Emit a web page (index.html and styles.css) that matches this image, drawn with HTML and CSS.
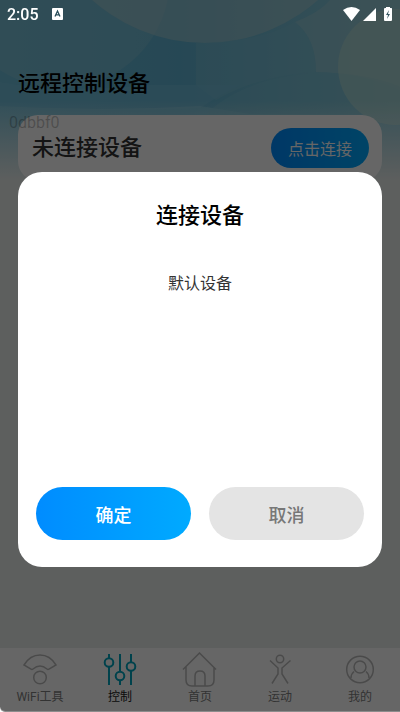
FILE: index.html
```html
<!DOCTYPE html>
<html lang="zh-CN">
<head>
<meta charset="utf-8">
<meta name="viewport" content="width=device-width, initial-scale=1">
<title>远程控制设备</title>
<link rel="stylesheet" href="styles.css">
</head>
<body>
<div class="app">
  <svg class="backdrop" viewBox="0 0 400 180" preserveAspectRatio="none" aria-hidden="true">
    <defs>
      <linearGradient id="sky" x1="0" y1="0" x2="1" y2="0">
        <stop offset="0" stop-color="#6cbcd8"/>
        <stop offset=".45" stop-color="#60b4d4"/>
        <stop offset="1" stop-color="#8ecbd8"/>
      </linearGradient>
      <linearGradient id="fade" x1="0" y1="0" x2="0" y2="1">
        <stop offset=".56" stop-color="#e8edeb" stop-opacity="0"/>
        <stop offset="1" stop-color="#e8edeb"/>
      </linearGradient>
    </defs>
    <rect width="400" height="180" fill="url(#sky)"/>
    <circle cx="60" cy="-22" r="110" fill="#8cc8d8" opacity=".4"/>
    <circle cx="205" cy="-127" r="170" fill="#b0d0d4" opacity=".5"/>
    <path d="M295 22Q315 38 316 72Q260 75 216 100L196 85V43Q260 42 295 22Z" fill="#80c4d8" opacity=".4"/>
    <path d="M295 22Q320 12 330 0H400V90Q360 72 316 72Q316 38 295 22Z" fill="#a0ced8" opacity=".5"/>
    <path d="M0 82Q60 94 150 85H240Q215 98 200 108Q90 112 0 106Z" fill="#74c0dc" opacity=".6"/>
    <path d="M0 106Q100 112 200 106L250 114H400V180H0Z" fill="#8cd0e4" opacity=".5"/>
    <ellipse cx="325" cy="160" rx="140" ry="87" fill="#7cc4d8" opacity=".45"/>
    <circle cx="396" cy="67" r="58" fill="#b8dcd4" opacity=".55"/>
    <rect width="400" height="180" fill="url(#fade)"/>
  </svg>

  <main class="page">
    <h1 class="page-title">远程控制设备</h1>
    <section class="device-card">
      <span class="device-code">0dbbf0</span>
      <h2 class="device-state">未连接设备</h2>
      <button class="connect" type="button">点击连接</button>
    </section>
  </main>

  <nav class="tabs">
    <a class="tab" href="#wifi">
      <svg class="tab-icon" viewBox="0 0 36 36" aria-hidden="true"><path d="M2 13Q8 3 18 3T34 13L27 17Q26 18 25 17Q18 11 11 17Q10 18 9 17Z"/><circle cx="18" cy="25.500" r="6.300"/></svg>
      <span>WiFi工具</span>
    </a>
    <a class="tab tab-active" href="#control">
      <svg class="tab-icon" viewBox="0 0 36 36" aria-hidden="true"><path d="M7 2V6M7 15V33M18 2V19M18 28V33M29 2V10M29 19V33"/><circle cx="7" cy="10.500" r="4.300"/><circle cx="18" cy="24" r="4.300"/><circle cx="29" cy="14.500" r="4.300"/></svg>
      <span>控制</span>
    </a>
    <a class="tab" href="#home">
      <svg class="tab-icon" viewBox="0 0 36 36" aria-hidden="true"><path d="M1 17.500L17.500 1L34 17.500M4 15V28Q4 34 10 34H26Q32 34 32 28V15M13 34V24Q13 19 18 19T23 24V34"/></svg>
      <span>首页</span>
    </a>
    <a class="tab" href="#sport">
      <svg class="tab-icon" viewBox="0 0 36 36" aria-hidden="true"><circle cx="18" cy="7" r="3.700"/><path d="M8 8.500L16 16V22L10 31.500M28.500 8.500L20 16V22L26 31.500"/></svg>
      <span>运动</span>
    </a>
    <a class="tab" href="#mine">
      <svg class="tab-icon" viewBox="0 0 36 36" aria-hidden="true"><circle cx="18" cy="17.500" r="13.300"/><circle cx="18" cy="15" r="6"/><path d="M9 26Q9 22 12 19.500M27 26Q27 22 24 19.500"/></svg>
      <span>我的</span>
    </a>
  </nav>
</div>

<div class="overlay">
  <header class="status">
    <time class="clock">2:05</time>
    <svg class="app-badge" viewBox="0 0 11 12" aria-hidden="true"><rect width="11" height="12" rx="1" fill="#fff"/><path d="M3 8.500L5.500 3L8 8.500M4 6.800H7" fill="none" stroke="#284d5a" stroke-width="1.300"/></svg>
    <svg class="signals" viewBox="0 0 50 16" aria-hidden="true">
      <g fill="#fff"><path d="M0 4Q8.500-2 17 4L8.500 15Z"/><path d="M20 15L33 2V15Z"/><path d="M43 1H47V2H48.500Q49 2 49 3V14Q49 15 48 15H42Q41 15 41 14V3Q41 2 42 2H43Z"/></g>
      <path d="M46 4L43 9H45L44 13L47 8H45Z" fill="#365660"/>
    </svg>
  </header>
  <section class="dialog" role="dialog" aria-modal="true" aria-labelledby="dialog-title">
    <h2 class="dialog-title" id="dialog-title">连接设备</h2>
    <p class="dialog-item">默认设备</p>
    <div class="actions">
      <button class="action action-ok" type="button">确定</button>
      <button class="action action-cancel" type="button">取消</button>
    </div>
  </section>
</div>
</body>
</html>
```
FILE: styles.css
```css
* {
  box-sizing: border-box;
}

body {
  margin: 0;
  font-family: Roboto, "Noto Sans CJK SC", sans-serif;
  color: #333;
}

h1,
h2,
p {
  margin: 0;
}

button {
  border: 0;
  padding: 0;
  font: inherit;
  cursor: pointer;
}

.app {
  position: relative;
  display: flex;
  flex-direction: column;
  min-height: 100vh;
  background: #e8edeb;
}

.backdrop {
  position: absolute;
  top: 0;
  left: 0;
  width: 100%;
  height: 180px;
}

.page {
  position: relative;
  flex: 1;
  padding: 68px 18px 0;
}

.page-title {
  font-size: 22px;
  line-height: 32px;
  font-weight: 500;
  color: #000;
}

.device-card {
  position: relative;
  display: flex;
  align-items: center;
  justify-content: space-between;
  margin-top: 15px;
  padding: 12px 13px 12px 14px;
  height: 66px;
  border-radius: 20px;
  background: #fff;
}

.device-code {
  position: absolute;
  top: -2px;
  left: -9px;
  font-size: 16px;
  line-height: 20px;
  color: rgba(0, 0, 0, 0.25);
}

.device-state {
  font-size: 22px;
  line-height: 32px;
  font-weight: 500;
}

.connect {
  width: 98px;
  height: 40px;
  border-radius: 20px;
  background: linear-gradient(90deg, #008cff, #00aaff);
  color: #fff;
  font-size: 16px;
}

.tabs {
  position: relative;
  display: flex;
  height: 64px;
  background: #fff;
}

.tab {
  flex: 1;
  display: flex;
  flex-direction: column;
  align-items: center;
  padding-top: 4px;
  font-size: 12px;
  line-height: 18px;
  color: #808080;
  text-decoration: none;
}

.tab-icon {
  width: 36px;
  height: 36px;
  fill: none;
  stroke: #bababa;
  stroke-width: 1.5;
}

.tab-active {
  color: #222;
}

.tab-active .tab-icon {
  stroke: #00a5be;
  stroke-width: 2;
}

.overlay {
  position: fixed;
  inset: 0;
  display: flex;
  flex-direction: column;
  border-bottom: 1px solid rgba(0, 0, 0, 0.45);
  border-bottom-left-radius: 5px;
  background: rgba(0, 0, 0, 0.6) padding-box;
}

.status {
  display: flex;
  align-items: center;
  height: 28px;
  padding: 0 7px;
  color: #fff;
}

.clock {
  font-size: 16px;
  font-weight: 500;
}

.app-badge {
  width: 11px;
  height: 12px;
  margin-left: 13px;
}

.signals {
  width: 50px;
  height: 16px;
  margin-left: auto;
}

.dialog {
  display: flex;
  flex-direction: column;
  margin: 144px 18px 0;
  padding: 28px 18px 27px;
  min-height: 395px;
  border-radius: 24px;
  background: #fff;
  text-align: center;
}

.dialog-title {
  font-size: 22px;
  line-height: 32px;
  font-weight: 500;
  color: #000;
}

.dialog-item {
  margin-top: 40px;
  font-size: 16px;
  line-height: 24px;
  color: #333;
}

.actions {
  display: flex;
  gap: 18px;
  margin-top: auto;
}

.action {
  flex: 1;
  height: 53px;
  border-radius: 27px;
  font-size: 18px;
  font-weight: 500;
}

.action-ok {
  background: linear-gradient(90deg, #008cff, #00aaff);
  color: #fff;
}

.action-cancel {
  background: #e4e4e4;
  color: #777;
}
```
